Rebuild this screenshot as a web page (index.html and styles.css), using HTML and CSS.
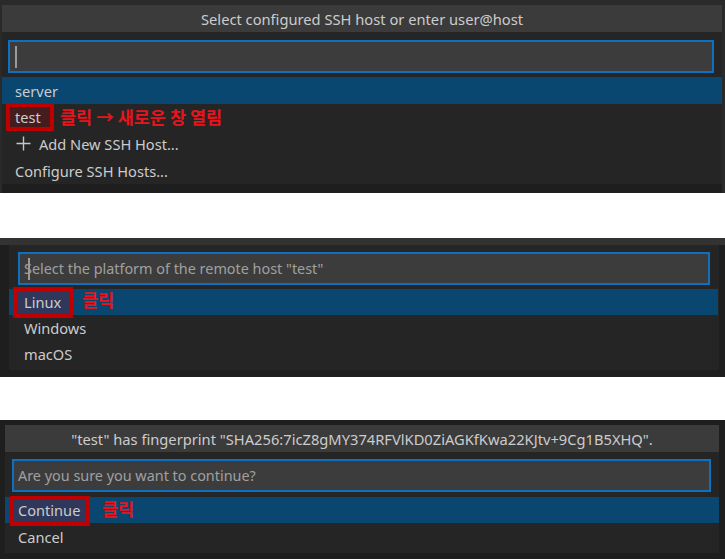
FILE: index.html
```html
<!DOCTYPE html>
<html>
<head>
<meta charset="utf-8">
<link rel="stylesheet" href="styles.css">
</head>
<body>
<div class="page">
  <section class="shot shot1">
    <div class="widget w1">
      <div class="title">Select configured SSH host or enter user@host</div>
      <div class="inputrow ir1">
        <div class="input"><span class="caret"></span></div>
      </div>
      <div class="list l1">
        <div class="row sel">server</div>
        <div class="row">
          <span class="mark m1"></span>
          <span class="txt">test</span>
          <span class="note n1">클릭 → 새로운 창 열림</span>
        </div>
        <div class="row"><svg class="plus" width="17" height="17" viewBox="0 0 17 17"><path d="M8.5 1.5v14M1.5 8.5h14" stroke="#c5c5c5" stroke-width="1.4" fill="none"/></svg>Add New SSH Host...</div>
        <div class="row">Configure SSH Hosts...</div>
      </div>
    </div>
    <div class="under"></div>
  </section>

  <section class="shot shot2">
    <div class="topstrip"></div>
    <div class="body2">
      <div class="widget w2">
        <div class="inputrow ir2">
          <div class="input"><span class="caret c2"></span><span class="ph">Select the platform of the remote host "test"</span></div>
        </div>
        <div class="list l2">
          <div class="row sel">
            <span class="mark m2"></span>
            <span class="txt">Linux</span>
            <span class="note n2">클릭</span>
          </div>
          <div class="row">Windows</div>
          <div class="row">macOS</div>
        </div>
      </div>
    </div>
  </section>

  <section class="shot shot3">
    <div class="widget w3">
      <div class="title">"test" has fingerprint "SHA256:7icZ8gMY374RFVlKD0ZiAGKfKwa22KJtv+9Cg1B5XHQ".</div>
      <div class="inputrow ir3">
        <div class="input"><span class="ph">Are you sure you want to continue?</span></div>
      </div>
      <div class="list l3">
        <div class="row sel">
          <span class="mark m3"></span>
          <span class="txt">Continue</span>
          <span class="note n3">클릭</span>
        </div>
        <div class="row">Cancel</div>
      </div>
    </div>
  </section>
</div>
</body>
</html>
```

FILE: styles.css
```css
html, body {
  margin: 0;
  padding: 0;
  background: #ffffff;
}
body {
  font-family: "Noto Sans", "Open Sans", sans-serif;
  color: #cccccc;
  width: 725px;
  height: 559px;
  overflow: hidden;
}
.page {
  display: flex;
  flex-direction: column;
}
.shot {
  background: #1e1e1e;
  box-sizing: border-box;
}
.shot1 {
  height: 193px;
  padding: 5px 3px 0 2px;
  background: #2a2a2a;
}
.shot2 {
  height: 139px;
  margin-top: 45px;
}
.shot3 {
  height: 139px;
  margin-top: 43px;
  padding: 5px 6px 0 5px;
  background: #1e1e1e;
}
.widget {
  background: #252526;
}
.w1 {
  height: 179px;
}
.under {
  height: 9px;
  background: #1e1e1e;
}
.title {
  height: 27px;
  background: #3b3b3b;
  display: flex;
  align-items: center;
  justify-content: center;
  font-size: 14.7px;
  color: #cccccc;
}
.inputrow {
  box-sizing: border-box;
}
.input {
  height: 33px;
  box-sizing: border-box;
  border: 2px solid #0e70c0;
  background: #3c3c3c;
  display: flex;
  align-items: center;
  position: relative;
  font-size: 14.4px;
}
.ir1 {
  padding: 8px 8px 4px 6px;
}
.caret {
  width: 2px;
  height: 22px;
  background: #9a9a9a;
  margin-left: 5px;
}
.ph {
  color: #a0a0a0;
  margin-left: 4px;
}
.c2 {
  position: absolute;
  left: 3px;
  top: 4px;
}
.row {
  height: 27px;
  display: flex;
  align-items: center;
  padding-left: 13px;
  font-size: 14.6px;
  color: #cccccc;
  position: relative;
}
.row.sel {
  background: #094771;
}
.l1 .row:nth-child(2) {
  height: 26px;
}
.plus {
  margin-right: 7px;
}
.txt {
  position: relative;
}
.mark {
  position: absolute;
  box-sizing: border-box;
  border: 4px solid #c00000;
  background: rgba(200, 0, 0, 0.2);
}
.m1 {
  left: 4px;
  top: -1px;
  width: 48px;
  height: 28px;
}
.note {
  position: absolute;
  color: #e8141c;
  font-family: "Noto Sans CJK KR", sans-serif;
  font-weight: 700;
  font-size: 17.5px;
  top: 0;
}
.n1 {
  left: 58px;
}

/* shot 2 */
.topstrip {
  height: 7px;
  background: #333333;
}
.body2 {
  display: flex;
  padding-left: 9px;
  padding-right: 6px;
  background: #1e1e1e;
  height: 132px;
}
.w2 {
  flex: 1;
  height: 125px;
}
.ir2 {
  padding: 7px 9px 4px 9px;
}
.l2 .row {
  height: 26px;
  padding-left: 15px;
  margin-right: 1px;
}
.m2 {
  left: 4px;
  top: -2px;
  width: 60px;
  height: 31px;
}
.n2 {
  left: 73px;
  top: -2px;
}

/* shot 3 */
.w3 {
  height: 128px;
}
.ir3 {
  padding: 7px 8px 5px 7px;
}
.l3 .row {
  padding-left: 13px;
  height: 26px;
}
.l3 .row + .row {
  height: 27px;
}
.m3 {
  left: 5px;
  top: -1px;
  width: 80px;
  height: 30px;
}
.n3 {
  left: 97px;
  top: -1px;
}
```
